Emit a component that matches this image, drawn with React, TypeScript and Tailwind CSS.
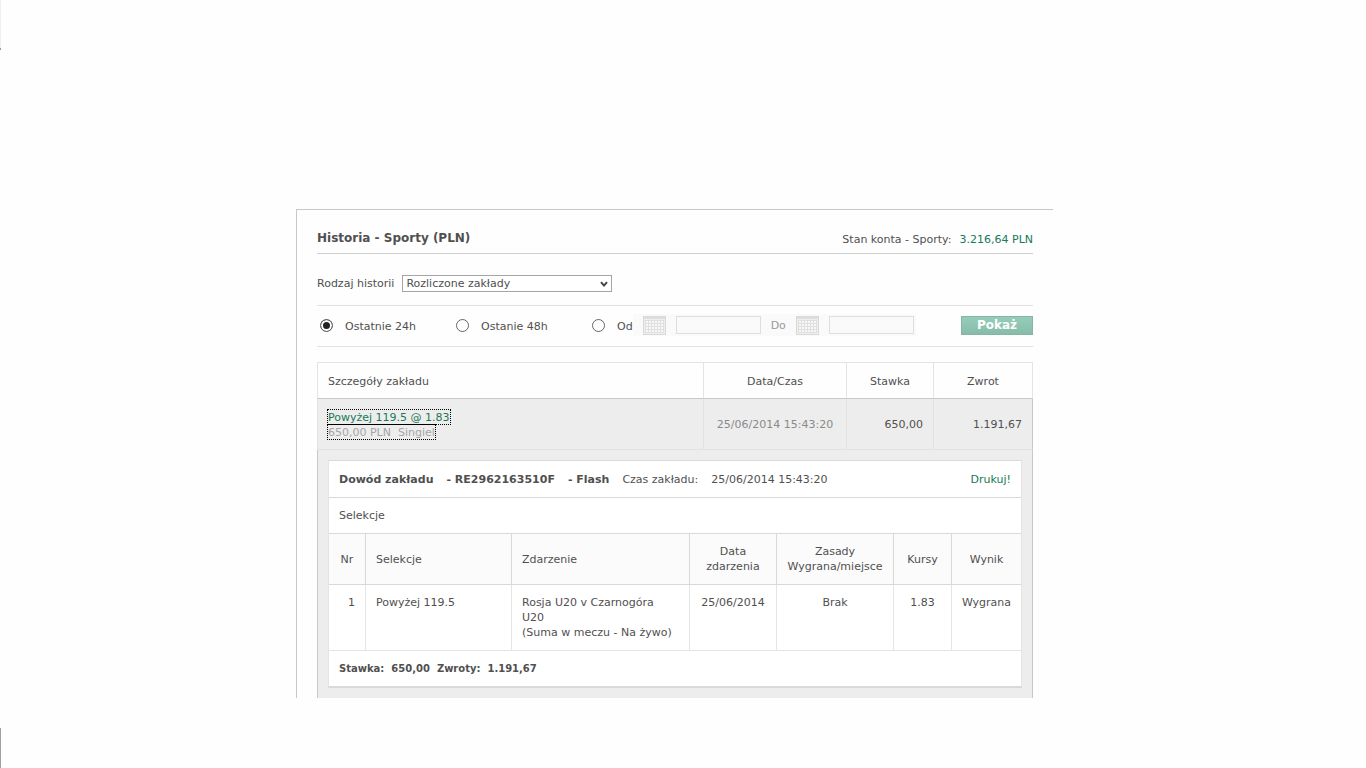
import React from 'react';

const selections = [
    {
        nr: 1,
        name: 'Powyżej 119.5',
        event: 'Rosja U20 v Czarnogóra U20',
        market: '(Suma w meczu - Na żywo)',
        date: '25/06/2014',
        rules: 'Brak',
        odds: '1.83',
        result: 'Wygrana',
    },
];

const CalendarIcon = () => (
    <svg width="23" height="19" viewBox="0 0 23 19" shapeRendering="crispEdges" aria-hidden="true">
        <rect width="23" height="19" fill="#d9d9d9" />
        <rect x="1" y="1" width="21" height="2" fill="#dedede" />
        <rect x="1" y="3" width="21" height="15" fill="#efefef" />
        <rect x="2" y="4" width="19" height="13" fill="#dfdfdf" />
        {[5, 8, 11, 14].map((y) =>
            [3, 6, 9, 12, 15, 18].map((x) => (
                <rect key={`${x}-${y}`} x={x} y={y} width="2" height="2" fill="#f8f8f8" />
            ))
        )}
    </svg>
);

const Radio = ({ id, label, checked = false }: { id: string; label: string; checked?: boolean }) => (
    <div className="flex items-center gap-3">
        <input
            type="radio"
            id={id}
            name="range"
            defaultChecked={checked}
            className="size-[13px] appearance-none rounded-full border border-[#666] bg-white checked:bg-[#222] checked:shadow-[inset_0_0_0_2px_#fff]"
        />
        <label htmlFor={id} className="pt-0.5">{label}</label>
    </div>
);

const DateField = ({ id, label }: { id: string; label: string }) => (
    <div className="flex items-center gap-2.5">
        <button type="button" disabled aria-label={`Kalendarz ${label}`}>
            <CalendarIcon />
        </button>
        <input id={id} aria-label={label} disabled className="h-[18px] w-[85px] border border-[#dedede] bg-[#fafafa]" />
    </div>
);

const BetSlip = () => (
    <div className="border border-b-2 border-[#d9d9d9] border-x-[#e4e4e4] bg-white">
        <div className="flex h-9 items-center gap-[13px] px-2.5">
            <h2 className="flex gap-[13px] font-bold">
                <span>Dowód zakładu</span>
                <span>- RE2962163510F</span>
                <span>- Flash</span>
            </h2>
            <span>Czas zakładu:</span>
            <span>25/06/2014 15:43:20</span>
            <a href="#drukuj" className="ml-auto text-[#187a56]">Drukuj!</a>
        </div>
        <h3 className="flex h-9 items-center border-t border-[#d9d9d9] px-2.5">Selekcje</h3>
        <table className="w-full table-fixed border-separate border-spacing-0">
            <colgroup>
                <col className="w-[37px]" />
                <col className="w-[146px]" />
                <col />
                <col className="w-[87px]" />
                <col className="w-[117px]" />
                <col className="w-[58px]" />
                <col className="w-[69px]" />
            </colgroup>
            <thead>
                <tr className="h-[52px] bg-[#fbfbfb] *:border-y *:border-r *:border-[#d9d9d9] *:font-normal *:last:border-r-0">
                    <th>Nr</th>
                    <th className="px-2.5 text-left">Selekcje</th>
                    <th className="px-2.5 text-left">Zdarzenie</th>
                    <th className="px-2">Data zdarzenia</th>
                    <th className="px-2">Zasady Wygrana/miejsce</th>
                    <th>Kursy</th>
                    <th>Wynik</th>
                </tr>
            </thead>
            <tbody>
                {selections.map((s) => (
                    <tr key={s.nr} className="h-[66px] align-top *:border-r *:border-b *:border-[#e4e4e4] *:py-2.5 *:last:border-r-0">
                        <td className="px-2.5 text-right">{s.nr}</td>
                        <td className="px-2.5">{s.name}</td>
                        <td className="pr-3.5 pl-2.5">
                            {s.event}
                            <br />
                            {s.market}
                        </td>
                        <td className="text-center">{s.date}</td>
                        <td className="text-center">{s.rules}</td>
                        <td className="text-center">{s.odds}</td>
                        <td className="text-center">{s.result}</td>
                    </tr>
                ))}
            </tbody>
        </table>
        <p className="flex h-[35px] items-center px-2.5 text-[10px] font-bold whitespace-pre">Stawka:  650,00  Zwroty:  1.191,67</p>
    </div>
);

const App = () => {
    return (
        <div className="flex min-h-screen flex-col bg-[#fefefe] font-['Verdana','DejaVu_Sans',sans-serif] text-[11px] leading-[15px] text-[#505050]">
            <div className="h-[50px] w-px border-b-2 border-[#999] bg-[#f0f0f0]" />

            <main className="mt-[159px] mr-[313px] ml-[296px] border-t border-l border-[#c8c8c8] px-5">
                <header className="flex h-11 items-center justify-between border-b border-[#d0d0d0] pt-3.5">
                    <h1 className="text-xs leading-[15px] font-bold">Historia - Sporty (PLN)</h1>
                    <p className="flex gap-2 pt-0.5">
                        <span>Stan konta - Sporty:</span>
                        <span className="text-[#187a56]">3.216,64 PLN</span>
                    </p>
                </header>

                <form>
                    <div className="flex h-[51px] items-center gap-2 pt-2">
                        <label htmlFor="kind">Rodzaj historii</label>
                        <div className="relative">
                            <select id="kind" className="block h-[17px] w-[210px] appearance-none border border-[#a5a5a5] bg-white pl-[3px] leading-[15px]">
                                <option>Rozliczone zakłady</option>
                            </select>
                            <svg width="8" height="7" viewBox="0 0 8 7" className="pointer-events-none absolute top-1.5 right-1" aria-hidden="true">
                                <path d="M1 1.2 4 4.6 7 1.2" fill="none" stroke="#444" strokeWidth="2" />
                            </svg>
                        </div>
                    </div>

                    <div className="flex h-[42px] items-center border-y border-[#e2e2e2] pb-0.5 pl-[3px]">
                        <div className="w-[136px]"><Radio id="h24" label="Ostatnie 24h" checked /></div>
                        <div className="w-[136px]"><Radio id="h48" label="Ostanie 48h" /></div>
                        <Radio id="from" label="Od" />
                        <div className="flex h-[22px] items-center gap-2.5 bg-[#fafafa] pr-0.5 pl-2.5">
                            <DateField id="dateFrom" label="Od" />
                            <label htmlFor="dateTo" className="text-[#999]">Do</label>
                            <DateField id="dateTo" label="Do" />
                        </div>
                        <button type="button" className="ml-auto h-[19px] w-[72px] border border-[#86b5a3] bg-linear-to-b from-[#96ccba] to-[#86bca9] text-xs leading-[15px] font-bold text-white">
                            Pokaż
                        </button>
                    </div>
                </form>

                <table className="mt-[15px] w-full table-fixed border-separate border-spacing-0">
                    <colgroup>
                        <col />
                        <col className="w-[143px]" />
                        <col className="w-[87px]" />
                        <col className="w-[99px]" />
                    </colgroup>
                    <thead>
                        <tr className="h-[37px] *:border-t *:border-r *:border-b *:border-[#e4e4e4] *:border-b-[#c8c8c8] *:pt-0.5 *:font-normal">
                            <th className="border-l px-2.5 text-left">Szczegóły zakładu</th>
                            <th>Data/Czas</th>
                            <th>Stawka</th>
                            <th>Zwrot</th>
                        </tr>
                    </thead>
                    <tbody className="bg-[#ededed]">
                        <tr className="h-[51px] *:border-r *:border-b *:border-[#e2e2e2] *:last:border-r-[#c8c8c8]">
                            <td className="border-l border-l-[#c8c8c8] px-[9px]">
                                <div className="flex flex-col items-start">
                                    <a href="#kupon" className="h-4 border border-dotted border-black leading-4 text-[#187a56]">Powyżej 119.5 @ 1.83</a>
                                    <a href="#kupon" className="-mt-px h-4 border border-dotted border-black leading-4 whitespace-pre text-[#a5a5a5] [border-top-style:solid]">650,00 PLN  Singiel</a>
                                </div>
                            </td>
                            <td className="text-center text-[#8a8a8a]">25/06/2014 15:43:20</td>
                            <td className="px-2.5 text-right">650,00</td>
                            <td className="px-2.5 text-right">1.191,67</td>
                        </tr>
                        <tr>
                            <td colSpan={4} className="border-x border-[#c8c8c8] p-2.5">
                                <BetSlip />
                            </td>
                        </tr>
                    </tbody>
                </table>
            </main>

            <div className="mt-auto h-10 w-px bg-[#a0a0a0]" />
        </div>
    );
};

export default App;
